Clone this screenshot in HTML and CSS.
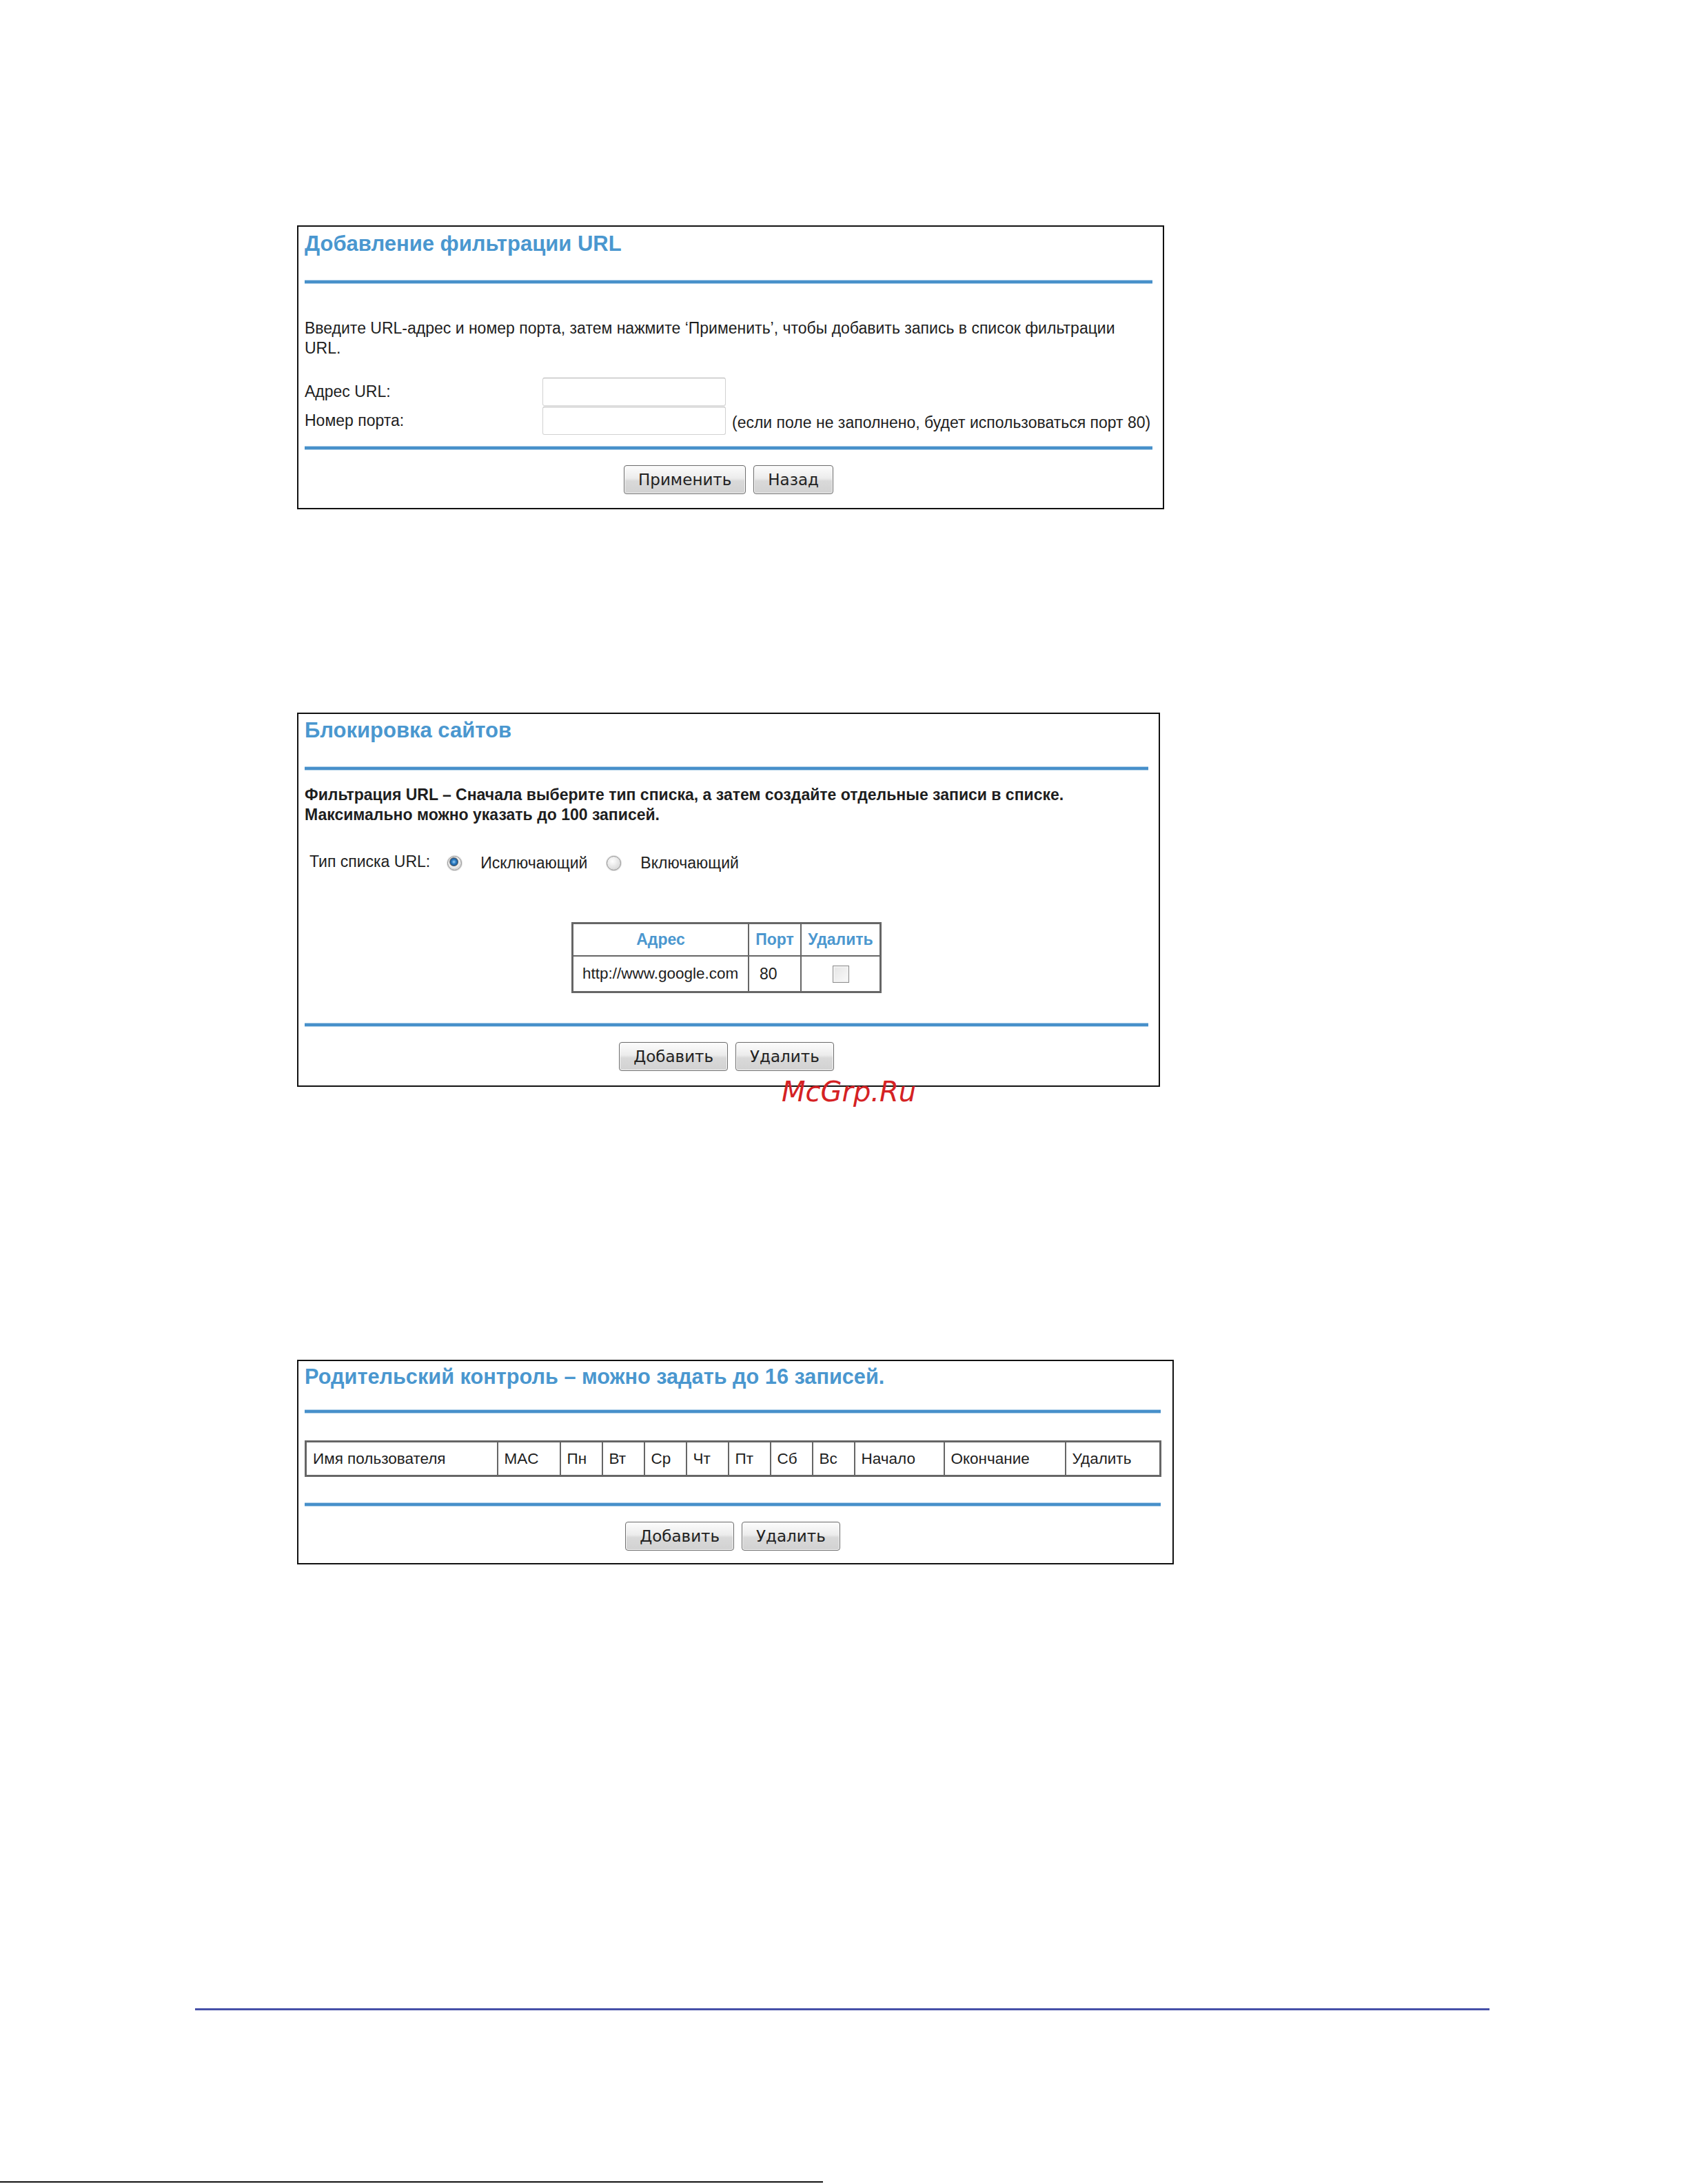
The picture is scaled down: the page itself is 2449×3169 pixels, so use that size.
FILE: index.html
```html
<!DOCTYPE html>
<html lang="ru">
<head>
  <meta charset="UTF-8" />
  <title>Фильтрация URL</title>
  <link rel="stylesheet" href="styles.css">
</head>
<body>
  <div class="page">

    <!-- добавление записи -->
    <section class="panel panel-add">
      <h2 class="panel-title">Добавление фильтрации URL</h2>
      <hr class="rule">
      <p class="note">Введите URL-адрес и номер порта, затем нажмите ‘Применить’, чтобы добавить запись в список фильтрации<br>URL.</p>
      <div class="form-row first">
        <label class="form-label">Адрес URL:</label>
        <input class="field" type="text">
      </div>
      <div class="form-row">
        <label class="form-label">Номер порта:</label>
        <input class="field" type="text">
        <span class="hint">(если поле не заполнено, будет использоваться порт 80)</span>
      </div>
      <hr class="rule rule-bottom">
      <div class="actions">
        <button class="btn">Применить</button>
        <button class="btn">Назад</button>
      </div>
    </section>

    <!-- блокировка сайтов -->
    <section class="panel panel-block">
      <h2 class="panel-title">Блокировка сайтов</h2>
      <hr class="rule">
      <p class="lead">Фильтрация URL – Сначала выберите тип списка, а затем создайте отдельные записи в списке.<br>Максимально можно указать до 100 записей.</p>
      <div class="list-type">
        <span class="list-type-label">Тип списка URL:</span>
        <input class="radio" type="radio" name="listtype" checked>
        <span class="radio-text">Исключающий</span>
        <input class="radio" type="radio" name="listtype">
        <span class="radio-text">Включающий</span>
      </div>
      <table class="grid url-table">
        <tr>
          <th class="col-addr">Адрес</th>
          <th class="col-port">Порт</th>
          <th class="col-del">Удалить</th>
        </tr>
        <tr>
          <td class="cell-addr">http://www.google.com</td>
          <td class="cell-port">80</td>
          <td class="cell-del"><input class="check" type="checkbox"></td>
        </tr>
      </table>
      <hr class="rule rule-bottom">
      <div class="actions">
        <button class="btn">Добавить</button>
        <button class="btn">Удалить</button>
      </div>
      <div class="watermark">McGrp.Ru</div>
    </section>

    <!-- родительский контроль -->
    <section class="panel panel-parent">
      <h2 class="panel-title">Родительский контроль – можно задать до 16 записей.</h2>
      <hr class="rule">
      <table class="grid parent-table">
        <colgroup>
          <col class="c-name">
          <col class="c-mac">
          <col class="c-day">
          <col class="c-day">
          <col class="c-day">
          <col class="c-day">
          <col class="c-day">
          <col class="c-day">
          <col class="c-day">
          <col class="c-start">
          <col class="c-end">
          <col class="c-del">
        </colgroup>
        <tr>
          <td>Имя пользователя</td>
          <td>MAC</td>
          <td>Пн</td>
          <td>Вт</td>
          <td>Ср</td>
          <td>Чт</td>
          <td>Пт</td>
          <td>Сб</td>
          <td>Вс</td>
          <td>Начало</td>
          <td>Окончание</td>
          <td>Удалить</td>
        </tr>
      </table>
      <hr class="rule rule-bottom">
      <div class="actions">
        <button class="btn">Добавить</button>
        <button class="btn">Удалить</button>
      </div>
    </section>

    <div class="page-rule"></div>
    <div class="edge-line"></div>
  </div>
</body>
</html>
```

FILE: styles.css
```css
body {
  margin: 0;
  background: #fff;
  color: #1e1e1e;
  font-family: "Liberation Sans", Arial, sans-serif;
  font-size: 23px;
}

.page {
  padding-top: 327px;
  height: 2842px;
  position: relative;
}

/* рамка окна настроек */
.panel {
  position: relative;
  margin-left: 431px;
  border: 2px solid #111;
  padding: 7px 15px 20px 9px;
  box-sizing: border-box;
}

.panel-add {
  width: 1258px;
}

.panel-block {
  width: 1252px;
  margin-top: 295px;
  padding-top: 6px;
  padding-bottom: 21px;
}

.panel-parent {
  width: 1272px;
  margin-top: 396px;
  padding-top: 5px;
  padding-bottom: 18px;
  padding-right: 17px;
}

.panel-title {
  margin: 0;
  font-size: 31px;
  line-height: 36px;
  font-weight: bold;
  color: #4a97cf;
}

.panel-parent .panel-title {
  font-size: 30.7px;
}

/* синяя линия-разделитель */
.rule {
  border: 0;
  height: 4px;
  margin: 35px 0 0;
  background: #4790ca;
  box-shadow: 0 1px 0 #b3d2ea, 0 -1px 0 #b3d2ea;
}

.panel-parent .rule {
  margin-top: 30px;
}

.note {
  margin: 51px 0 0;
  line-height: 29px;
}

.form-row {
  display: flex;
  align-items: center;
  height: 41px;
  margin-top: 1px;
}

.form-row.first {
  margin-top: 28px;
}

.form-label {
  width: 345px;
}

.field {
  width: 266px;
  height: 41px;
  box-sizing: border-box;
  border: 1px solid #d2d2d2;
  border-top-color: #aeaeae;
  border-radius: 3px;
  background: #fff;
  margin: 0;
}

.hint {
  margin-left: 9px;
  padding-top: 6px;
}

.panel-add .rule-bottom {
  margin-top: 17px;
}

.actions {
  display: flex;
  justify-content: center;
  gap: 11px;
  margin-top: 23px;
}

.btn {
  height: 42px;
  padding: 0 20px;
  border: 1px solid #6c6c6c;
  border-radius: 4px;
  background: linear-gradient(#fcfcfc, #ececec 45%, #d9d9d9 55%, #d2d2d2);
  box-shadow: inset 0 0 0 1px #f7f7f7;
  font-family: "DejaVu Sans", Tahoma, sans-serif;
  font-size: 23px;
  color: #222;
}

.panel-block .actions,
.panel-parent .actions {
  margin-top: 23px;
}

/* блокировка сайтов */
.lead {
  margin: 22px 0 0;
  font-weight: bold;
  line-height: 29px;
}

.list-type {
  display: flex;
  align-items: center;
  height: 30px;
  margin-top: 40px;
  padding-left: 7px;
}

.list-type-label {
  margin-top: -4px;
}

.radio {
  appearance: none;
  width: 21px;
  height: 21px;
  margin: 0 27px 0 25px;
  border: 1px solid #8d8d8d;
  border-radius: 50%;
  background: radial-gradient(circle at 40% 35%, #ffffff, #dcdcdc 70%, #c4c4c4);
  box-shadow: 0 0 0 1px #e2e2e2;
}

.radio:checked {
  background: radial-gradient(circle at 45% 40%, #9fd0f5 0, #2f7fc4 3px, #1e5f9c 5px, #6c6c6c 6px, #f4f4f4 7px, #dadada 10px);
}

.radio-text + .radio {
  margin-left: 28px;
  margin-right: 28px;
}

.grid {
  border-collapse: collapse;
  border: 3px solid #666;
}

.grid td,
.grid th {
  border: 2px solid #666;
  padding: 0;
}

.url-table {
  margin: 71px auto 0;
  width: 450px;
}

.url-table th {
  height: 45px;
  color: #4b97cf;
  font-weight: bold;
  text-align: center;
}

.col-addr {
  width: 253px;
}

.col-port {
  width: 74px;
}

.url-table td {
  height: 50px;
}

.cell-addr {
  padding-left: 13px !important;
  font-size: 22.5px;
}

.cell-port {
  padding-left: 15px !important;
}

.cell-del {
  text-align: center;
}

.check {
  appearance: none;
  width: 24px;
  height: 25px;
  margin: 6px 0 0;
  border: 1px solid #8a8a8a;
  background: linear-gradient(135deg, #e4e4e4, #fafafa);
  box-shadow: inset 0 0 0 2px #f2f2f2;
}

.panel-block .rule-bottom {
  margin-top: 44px;
}

.watermark {
  position: absolute;
  left: 701px;
  top: 528px;
  font-family: "DejaVu Sans", sans-serif;
  font-style: italic;
  font-size: 40px;
  line-height: 40px;
  color: #d52224;
}

/* родительский контроль */
.parent-table {
  margin-top: 40px;
  width: 1240px;
  table-layout: fixed;
}

.c-name { width: 278px; }
.c-mac { width: 91px; }
.c-day { width: 61px; }
.c-start { width: 130px; }
.c-end { width: 176px; }
.c-del { width: 138px; }

.parent-table td {
  height: 47px;
  padding-left: 9px;
  font-size: 22.5px;
  white-space: nowrap;
}

.panel-parent .rule-bottom {
  margin-top: 38px;
}

.page-rule {
  margin: 644px 0 0 283px;
  width: 1878px;
  height: 3px;
  background: #4650a8;
}

.edge-line {
  margin-top: 248px;
  width: 1194px;
  height: 2px;
  background: #111;
}
```
